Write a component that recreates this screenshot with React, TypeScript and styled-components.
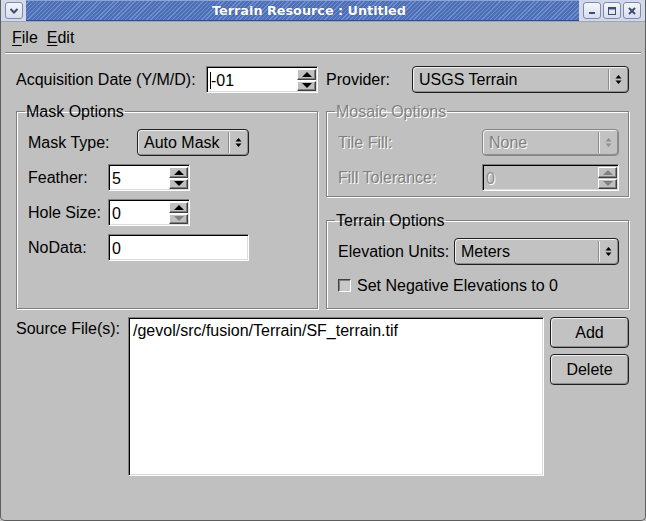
import React from 'react';
import styled, { createGlobalStyle, css } from 'styled-components';

const GlobalStyle = createGlobalStyle`
  html, body { margin: 0; padding: 0; background: #c0c0c0; }
  body { font-family: "Liberation Sans", Arial, sans-serif; font-size: 16px; color: #000; }
  * { box-sizing: border-box; }
`;

const Window = styled.div`
  width: 646px;
  height: 521px;
  display: flex;
  flex-direction: column;
  background: #c0c0c0;
  border: 1px solid #5d5d5d;
  border-top: none;
  border-radius: 0 0 5px 5px;
  overflow: hidden;
`;

const TitleBar = styled.div`
  height: 22px;
  display: flex;
  background: #d4d9e7;
  border-bottom: 1px solid #9aa5c2;
`;

const TitleCap = styled.div<{ $width: number }>`
  width: ${(p) => p.$width}px;
  display: flex;
  align-items: center;
  justify-content: center;
  gap: 2px;
`;

const TitleStripes = styled.div`
  flex: 1;
  display: flex;
  align-items: center;
  justify-content: center;
  padding-left: 13px;
  background: repeating-linear-gradient(135deg, #4e6fb6 0px, #4e6fb6 2px, #6f8fcd 2px, #6f8fcd 3px);
  border-top: 1px solid #8aa2d6;
  border-bottom: 1px solid #2f4b8c;
`;

const TitleText = styled.span`
  font-family: "DejaVu Sans", sans-serif;
  font-weight: bold;
  font-size: 12.8px;
  color: #fff;
  text-shadow: 0 0 1px #2a4480;
`;

const TitleButton = styled.div`
  width: 18px;
  height: 17px;
  border: 1px solid #7d8bb0;
  border-radius: 3px;
  background: linear-gradient(#f4f6fb, #d9deeb);
  display: flex;
  align-items: center;
  justify-content: center;
`;

const MenuBar = styled.div`
  height: 30px;
  display: flex;
  align-items: center;
  gap: 9px;
  padding-left: 11px;
  padding-top: 1px;
`;

const MenuItem = styled.span`
  font-size: 16px;
  u { text-decoration: underline; text-underline-offset: 2px; }
`;

const Separator = styled.div`
  height: 2px;
  margin: 0 4px;
  border-top: 1px solid #808080;
  border-bottom: 1px solid #fff;
`;

const Content = styled.div`
  padding: 12px 16px 0 15px;
  display: flex;
  flex-direction: column;
`;

const TopGrid = styled.div`
  display: grid;
  grid-template-columns: 302px 303px;
  column-gap: 8px;
  row-gap: 9px;
`;

const Cell = styled.div`
  display: flex;
  align-items: center;
  justify-content: space-between;
  height: 27px;
`;

const Label = styled.span<{ $width?: number; $disabled?: boolean }>`
  white-space: nowrap;
  padding-top: 1px;
  ${(p) => p.$width !== undefined && css`width: ${p.$width}px; flex: none;`}
  ${(p) =>
    p.$disabled &&
    css`
      color: #808080;
      text-shadow: 1px 1px 0 #fff;
    `}
`;

const GroupBox = styled.fieldset<{ $height: number; $disabled?: boolean }>`
  margin: 0;
  height: ${(p) => p.$height}px;
  border: 1px solid #808080;
  box-shadow: inset 1px 1px 0 #fff, 1px 1px 0 #fff;
  padding: 8px 9px 0 11px;
  display: flex;
  flex-direction: column;
  gap: 8px;
  min-width: 0;
  legend {
    padding: 0 1px;
    margin-left: -3px;
    line-height: 19px;
    ${(p) =>
      p.$disabled &&
      css`
        color: #808080;
        text-shadow: 1px 1px 0 #fff;
      `}
  }
`;

const RightColumn = styled.div`
  display: flex;
  flex-direction: column;
  gap: 14px;
`;

const FormRow = styled.div`
  display: flex;
  align-items: center;
  height: 27px;
`;

const CheckRow = styled.div`
  display: flex;
  align-items: center;
  gap: 6px;
  height: 18px;
  margin-top: 3px;
`;

const CheckBox = styled.span`
  width: 13px;
  height: 13px;
  border: 1px solid;
  border-color: #404040 #fff #fff #404040;
  background: #c8c8c8;
  box-shadow: inset 1px 1px 0 #808080;
`;

const Sunken = css`
  border: 1px solid;
  border-color: #808080 #fff #fff #808080;
  box-shadow: inset 1px 1px 0 #000, inset -1px -1px 0 #dcdcdc;
`;

const SpinFrame = styled.div<{ $width: number; $disabled?: boolean }>`
  ${Sunken}
  width: ${(p) => p.$width}px;
  height: 27px;
  background: ${(p) => (p.$disabled ? '#c0c0c0' : '#fff')};
  display: flex;
  align-items: stretch;
  padding: 2px 1px 1px 2px;
`;

const FieldText = styled.span<{ $disabled?: boolean }>`
  flex: 1;
  display: flex;
  align-items: center;
  padding-left: 1px;
  padding-top: 1px;
  color: ${(p) => (p.$disabled ? '#909090' : '#000')};
  ${(p) => p.$disabled && css`text-shadow: 1px 1px 0 #fff;`}
`;

const Caret = styled.span`
  width: 1px;
  height: 17px;
  background: #000;
`;

const SpinButtons = styled.div`
  width: 19px;
  display: flex;
  flex-direction: column;
  gap: 1px;
`;

const SpinButton = styled.div`
  flex: 1;
  background: #c0c0c0;
  border: 1px solid;
  border-color: #fff #404040 #404040 #fff;
  box-shadow: inset -1px -1px 0 #808080;
  display: flex;
  align-items: center;
  justify-content: center;
`;

const Arrow = styled.span<{ $dir: 'up' | 'down'; $disabled?: boolean }>`
  width: 0;
  height: 0;
  border-left: 5px solid transparent;
  border-right: 5px solid transparent;
  ${(p) =>
    p.$dir === 'up'
      ? css`border-bottom: 5px solid ${p.$disabled ? '#808080' : '#000'};`
      : css`border-top: 5px solid ${p.$disabled ? '#808080' : '#000'};`}
`;

const ComboFrame = styled.div<{ $width: number; $disabled?: boolean }>`
  width: ${(p) => p.$width}px;
  height: 27px;
  display: flex;
  align-items: stretch;
  border: 1px solid ${(p) => (p.$disabled ? '#888' : '#1e1e1e')};
  border-radius: 4px;
  background: #c2c2c2;
  box-shadow: inset 1px 1px 0 #f2f2f2, inset -1px -1px 0 #8c8c8c;
`;

const ComboText = styled.span<{ $disabled?: boolean }>`
  flex: 1;
  display: flex;
  align-items: center;
  padding-left: 6px;
  padding-top: 1px;
  ${(p) =>
    p.$disabled &&
    css`
      color: #808080;
      text-shadow: 1px 1px 0 #fff;
    `}
`;

const ComboArrowBox = styled.span`
  width: 19px;
  margin: 2px 1px 2px 0;
  border-left: 1px solid #8c8c8c;
  box-shadow: inset 1px 0 0 #f2f2f2;
  display: flex;
  align-items: center;
  justify-content: center;
`;

const SourceRow = styled.div`
  display: flex;
  align-items: flex-start;
  margin-top: 8px;
`;

const ListBox = styled.div`
  ${Sunken}
  width: 416px;
  height: 159px;
  background: #fff;
  padding: 4px 4px;
`;

const ButtonColumn = styled.div`
  display: flex;
  flex-direction: column;
  gap: 6px;
  margin-left: 6px;
`;

const PushButton = styled.button`
  width: 79px;
  height: 31px;
  font-family: inherit;
  font-size: 16px;
  color: #000;
  background: #c2c2c2;
  border: 1px solid #1e1e1e;
  border-radius: 4px;
  box-shadow: inset 1px 1px 0 #f2f2f2, inset -1px -1px 0 #8c8c8c;
  padding: 1px 0 0;
`;

const SourceLabel = styled(Label)`
  padding-top: 3px;
`;

function SpinBox({
  value,
  width,
  disabled,
  upDisabled,
  downDisabled,
  caret,
}: {
  value: string;
  width: number;
  disabled?: boolean;
  upDisabled?: boolean;
  downDisabled?: boolean;
  caret?: boolean;
}) {
  return (
    <SpinFrame $width={width} $disabled={disabled}>
      <FieldText $disabled={disabled}>
        {caret && <Caret />}
        {value}
      </FieldText>
      <SpinButtons>
        <SpinButton>
          <Arrow $dir="up" $disabled={disabled || upDisabled} />
        </SpinButton>
        <SpinButton>
          <Arrow $dir="down" $disabled={disabled || downDisabled} />
        </SpinButton>
      </SpinButtons>
    </SpinFrame>
  );
}

function TextField({ value, width }: { value: string; width: number }) {
  return (
    <SpinFrame $width={width}>
      <FieldText>{value}</FieldText>
    </SpinFrame>
  );
}

function Combo({ value, width, disabled }: { value: string; width: number; disabled?: boolean }) {
  const c = disabled ? '#909090' : '#000';
  return (
    <ComboFrame $width={width} $disabled={disabled}>
      <ComboText $disabled={disabled}>{value}</ComboText>
      <ComboArrowBox>
        <svg width="7" height="11" viewBox="0 0 7 11">
          <path d="M3.5 1 L6.5 4.5 L0.5 4.5 Z" fill={c} />
          <path d="M3.5 10 L6.5 6.5 L0.5 6.5 Z" fill={c} />
        </svg>
      </ComboArrowBox>
    </ComboFrame>
  );
}

const glyph = '#3d4d75';

export default function App() {
  return (
    <>
      <GlobalStyle />
      <Window>
        <TitleBar>
          <TitleCap $width={25}>
            <TitleButton>
              <svg width="10" height="8" viewBox="0 0 10 8">
                <path d="M1.5 2 L5 5.5 L8.5 2" stroke={glyph} strokeWidth="2" fill="none" />
              </svg>
            </TitleButton>
          </TitleCap>
          <TitleStripes>
            <TitleText>Terrain Resource : Untitled</TitleText>
          </TitleStripes>
          <TitleCap $width={66}>
            <TitleButton>
              <svg width="10" height="10" viewBox="0 0 10 10">
                <rect x="2" y="6" width="6" height="2" fill={glyph} />
              </svg>
            </TitleButton>
            <TitleButton>
              <svg width="10" height="10" viewBox="0 0 10 10">
                <rect x="1.5" y="1.5" width="7" height="7" stroke={glyph} fill="none" />
                <rect x="1" y="1" width="8" height="2.5" fill={glyph} />
              </svg>
            </TitleButton>
            <TitleButton>
              <svg width="10" height="10" viewBox="0 0 10 10">
                <path d="M2 2 L8 8 M8 2 L2 8" stroke={glyph} strokeWidth="2" />
              </svg>
            </TitleButton>
          </TitleCap>
        </TitleBar>

        <MenuBar>
          <MenuItem>
            <u>F</u>ile
          </MenuItem>
          <MenuItem>
            <u>E</u>dit
          </MenuItem>
        </MenuBar>
        <Separator />

        <Content>
          <TopGrid>
            <Cell>
              <Label>Acquisition Date (Y/M/D):</Label>
              <SpinBox value="-01" width={112} caret />
            </Cell>
            <Cell>
              <Label>Provider:</Label>
              <Combo value="USGS Terrain" width={217} />
            </Cell>

            <GroupBox $height={207}>
              <legend>Mask Options</legend>
              <FormRow>
                <Label $width={109}>Mask Type:</Label>
                <Combo value="Auto Mask" width={112} />
              </FormRow>
              <FormRow>
                <Label $width={80}>Feather:</Label>
                <SpinBox value="5" width={82} />
              </FormRow>
              <FormRow>
                <Label $width={80}>Hole Size:</Label>
                <SpinBox value="0" width={82} downDisabled />
              </FormRow>
              <FormRow>
                <Label $width={80}>NoData:</Label>
                <TextField value="0" width={141} />
              </FormRow>
            </GroupBox>

            <RightColumn>
              <GroupBox $height={95} $disabled>
                <legend>Mosaic Options</legend>
                <FormRow>
                  <Label $width={144} $disabled>
                    Tile Fill:
                  </Label>
                  <Combo value="None" width={137} disabled />
                </FormRow>
                <FormRow>
                  <Label $width={144} $disabled>
                    Fill Tolerance:
                  </Label>
                  <SpinBox value="0" width={137} disabled />
                </FormRow>
              </GroupBox>
              <GroupBox $height={98}>
                <legend>Terrain Options</legend>
                <FormRow>
                  <Label $width={116}>Elevation Units:</Label>
                  <Combo value="Meters" width={165} />
                </FormRow>
                <CheckRow>
                  <CheckBox />
                  <Label>Set Negative Elevations to 0</Label>
                </CheckRow>
              </GroupBox>
            </RightColumn>
          </TopGrid>

          <SourceRow>
            <SourceLabel $width={112}>Source File(s):</SourceLabel>
            <ListBox>/gevol/src/fusion/Terrain/SF_terrain.tif</ListBox>
            <ButtonColumn>
              <PushButton>Add</PushButton>
              <PushButton>Delete</PushButton>
            </ButtonColumn>
          </SourceRow>
        </Content>
      </Window>
    </>
  );
}
